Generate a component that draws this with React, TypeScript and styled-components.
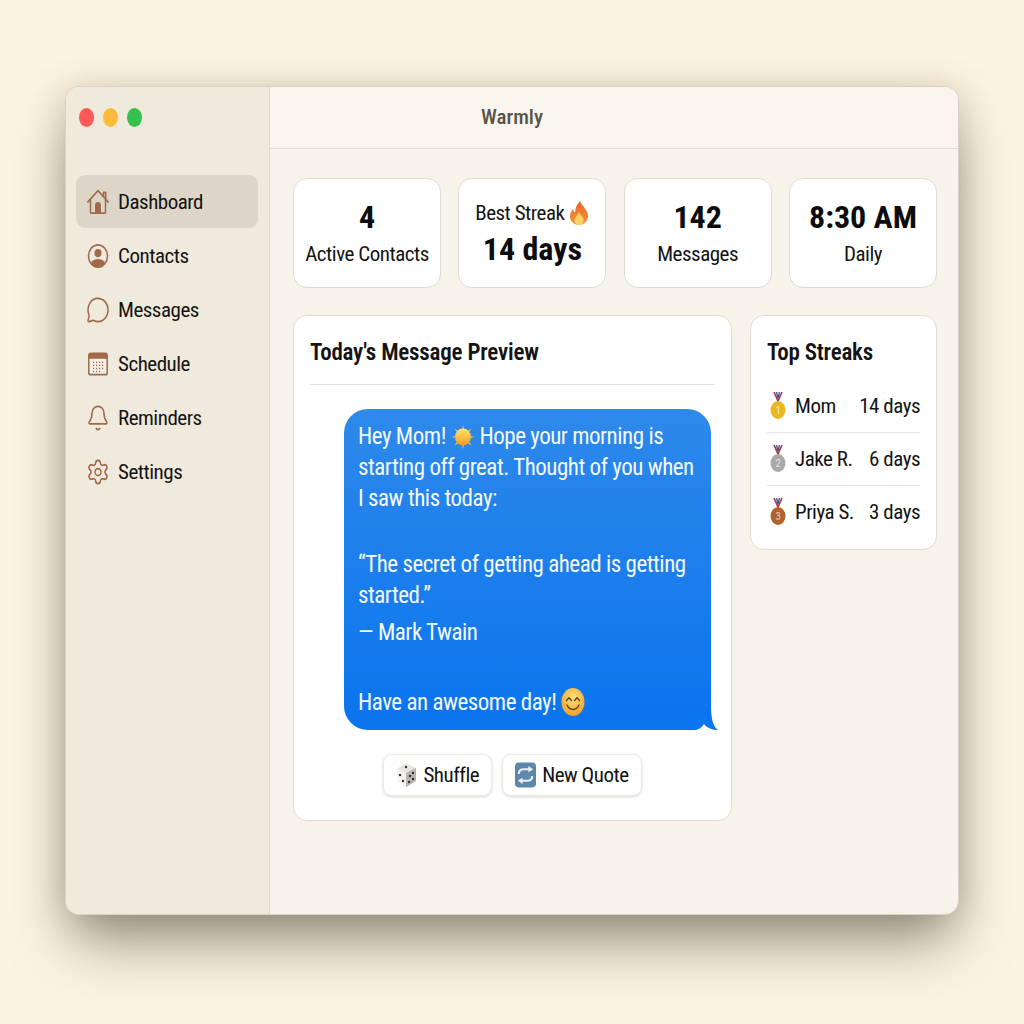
import { ReactNode } from "react";
import styled, { createGlobalStyle } from "styled-components";
import { Bell, MessageCircle, Settings } from "lucide-react";

const GlobalStyle = createGlobalStyle`
  html, body { margin: 0; padding: 0; background: #fcf3e1; }
  body {
    font-family: Roboto, "Liberation Sans", sans-serif;
    font-stretch: 85%;
    letter-spacing: -0.48px;
    color: #141414;
  }
  * { box-sizing: border-box; }
`;

const Page = styled.div`
  width: 1024px;
  height: 1024px;
  padding: 86px 65px 0;
  overflow: hidden;
  background: #fcf3e1;
`;

const Window = styled.div`
  width: 894px;
  height: 829px;
  display: flex;
  border-radius: 14px;
  overflow: hidden;
  border: 1px solid #d8d2c5;
  background: #f6f3ea;
  box-shadow: 0 34px 58px -8px rgba(62, 56, 44, 0.5), 0 4px 36px rgba(90, 78, 55, 0.24);
`;

const Sidebar = styled.aside`
  width: 204px;
  flex: none;
  padding: 0 11px 0 10px;
  background: #f0eadd;
  border-right: 1px solid #e3dccd;
`;

const TrafficLights = styled.div`
  height: 88px;
  display: flex;
  align-items: center;
  gap: 9px;
  padding: 0 0 28px 3px;
`;

const Light = styled.span<{ $color: string }>`
  width: 15px;
  height: 19px;
  border-radius: 50%;
  background: ${(p) => p.$color};
`;

const NavList = styled.nav`
  display: flex;
  flex-direction: column;
  gap: 1px;
`;

const NavItem = styled.div<{ $active?: boolean }>`
  height: 53px;
  display: flex;
  align-items: center;
  gap: 8px;
  padding: 1px 0 0 10px;
  border-radius: 9px;
  font-size: 21px;
  background: ${(p) => (p.$active ? "#ddd5c8" : "transparent")};
  svg {
    flex: none;
    width: 24px;
    height: 28px;
    color: #a0694a;
  }
`;

const Content = styled.main`
  flex: 1;
  min-width: 0;
  display: flex;
  flex-direction: column;
`;

const TitleBar = styled.header`
  height: 62px;
  flex: none;
  display: flex;
  align-items: center;
  justify-content: center;
  padding: 0 204px 1px 0;
  font-size: 21px;
  font-weight: 500;
  letter-spacing: 0;
  color: #57534a;
  background: #f9f5ec;
  border-bottom: 1px solid #e2ddd1;
`;

const Body = styled.div`
  padding: 29px 21px 0 23px;
  display: flex;
  flex-direction: column;
  gap: 27px;
`;

const StatsRow = styled.section`
  display: grid;
  grid-template-columns: repeat(4, 148px);
  justify-content: space-between;
`;

const Card = styled.div`
  background: #fff;
  border: 1px solid #e3dccd;
  border-radius: 14px;
`;

const StatCard = styled(Card)<{ $labelFirst?: boolean }>`
  height: 110px;
  display: flex;
  flex-direction: column;
  align-items: center;
  justify-content: center;
  gap: ${(p) => (p.$labelFirst ? 4 : 5)}px;
  padding: ${(p) => (p.$labelFirst ? "2px 0 0" : "0 0 2px")};
`;

const StatValue = styled.div`
  font-size: 32px;
  line-height: 38px;
  font-weight: 680;
  letter-spacing: 0;
  color: #0c0c0c;
`;

const StatLabel = styled.div`
  display: flex;
  align-items: center;
  gap: 5px;
  height: 26px;
  font-size: 21px;
  line-height: 26px;
`;

const Columns = styled.section`
  display: flex;
  align-items: flex-start;
  justify-content: space-between;
`;

const PreviewCard = styled(Card)`
  width: 439px;
  height: 506px;
  padding: 0 16px;
`;

const PreviewTitle = styled.h2`
  margin: 0;
  height: 69px;
  display: flex;
  align-items: center;
  padding-top: 4px;
  font-size: 23px;
  font-weight: 640;
  letter-spacing: -0.2px;
  border-bottom: 1px solid #e4e2dc;
`;

const Bubble = styled.div`
  position: relative;
  width: 367px;
  height: 321px;
  margin: 24px 4px 0 auto;
  padding: 12px 14px;
  border-radius: 24px;
  color: #f4f9ff;
  background: linear-gradient(180deg, #2e89ea 0%, #0a74ee 100%);
  font-size: 23px;
  line-height: 31px;
`;

const BubbleTail = styled.svg`
  position: absolute;
  right: -8px;
  bottom: 0;
`;

const Para = styled.p<{ $top?: number }>`
  margin: ${(p) => p.$top ?? 0}px 0 0;
  white-space: nowrap;
  svg { vertical-align: -6px; }
`;

const Actions = styled.div`
  margin-top: 24px;
  display: flex;
  justify-content: center;
  gap: 10px;
`;

const ActionButton = styled.button`
  height: 42px;
  display: flex;
  align-items: center;
  gap: 6px;
  padding: 0 12px;
  font: inherit;
  font-stretch: 85%;
  font-size: 21px;
  letter-spacing: -0.48px;
  color: #141414;
  background: #fff;
  border: 1px solid #eeebe5;
  border-radius: 9px;
  box-shadow: 0 1px 3px rgba(60, 50, 30, 0.2);
`;

const StreaksCard = styled(Card)`
  width: 187px;
  height: 235px;
  padding: 0 16px;
`;

const StreaksTitle = styled.h3`
  margin: 0;
  height: 64px;
  padding-top: 8px;
  display: flex;
  align-items: center;
  font-size: 23px;
  font-weight: 640;
  letter-spacing: -0.2px;
`;

const StreakRow = styled.div`
  height: 53px;
  display: flex;
  align-items: center;
  font-size: 21px;
  border-bottom: 1px solid #e6e5e2;
  &:last-child { border-bottom: none; height: 52px; }
  svg { flex: none; margin: 0 9px 2px 3px; }
  span:last-child { margin-left: auto; }
`;

const CalendarIcon = () => (
  <svg viewBox="0 0 24 24" preserveAspectRatio="none" fill="none">
    <rect x="2.800" y="2.800" width="18.400" height="18.400" rx="2" fill="#f6efe6" stroke="#a0694a" strokeWidth="1.500" />
    <path d="M2.800 7.500V4.800a2 2 0 0 1 2-2h14.400a2 2 0 0 1 2 2v2.700z" fill="#a0694a" />
    {[10, 12.600, 15.200, 17.800].map((y, r) =>
      [7, 10, 13, 16].map((x) =>
        r === 3 && x === 16 ? null : <rect key={`${x}-${y}`} x={x} y={y} width="1.200" height="1.200" fill="#a0694a" />
      )
    )}
  </svg>
);

const HouseIcon = () => (
  <svg viewBox="0 0 24 24" preserveAspectRatio="none" fill="none" stroke="#a0694a" strokeWidth="1.500" strokeLinejoin="round" strokeLinecap="round">
    <path d="M1.800 12 12 2.200 22.200 12" />
    <path d="M17.500 7V3.800h2.200v5.400" />
    <path d="M4.500 10.200v10.600a.8.8 0 0 0 .8.8h13.400a.8.8 0 0 0 .8-.8V10.200" />
    <path d="M9.800 21.500v-6.500a2.200 2.200 0 0 1 4.400 0v6.500z" fill="#a0694a" />
  </svg>
);

const ContactIcon = () => (
  <svg viewBox="0 0 24 24" preserveAspectRatio="none" fill="none">
    <circle cx="12" cy="12" r="9.500" stroke="#a0694a" strokeWidth="1.500" />
    <circle cx="12" cy="9.500" r="3.500" fill="#a0694a" />
    <path d="M5 18.300C6.200 15.500 8.900 14.600 12 14.600s5.800.9 7 3.700A9.500 9.500 0 0 1 12 21.500a9.500 9.500 0 0 1-7-3.200z" fill="#a0694a" />
  </svg>
);

const FlameIcon = () => (
  <svg width="20" height="26" viewBox="0 0 20 26">
    <defs>
      <linearGradient id="flame" x1="0" y1="0" x2="0" y2="1">
        <stop offset="0" stopColor="#f0622a" />
        <stop offset="1" stopColor="#f2993a" />
      </linearGradient>
    </defs>
    <path d="M11 1c1 4 7 8 8 14 .6 5.500-4 10-9 10S.5 21 1 15.500c.3-3 2-5 3-6.500.4 1.800 1 3 2.200 3.500C6 8 8 4 11 1z" fill="url(#flame)" />
    <path d="M10 12c.6 3 5 5 4.600 8.500C14.300 23.500 12.300 25 10 25s-4.500-1.600-4.600-4.500C5.300 17.500 8.500 15.500 10 12z" fill="#fbd267" />
  </svg>
);

const SunIcon = () => (
  <svg width="24" height="26" viewBox="0 0 24 26">
    <defs>
      <linearGradient id="sun" x1="0" y1="0" x2="0" y2="1">
        <stop offset="0" stopColor="#fde36f" />
        <stop offset="1" stopColor="#f79a1e" />
      </linearGradient>
    </defs>
    {[0, 45, 90, 135, 180, 225, 270, 315].map((a) => (
      <path key={a} d="M12 0.500 12.800 5h-1.600z" fill="#f0c23c" transform={`rotate(${a} 12 13)`} />
    ))}
    <ellipse cx="12" cy="13" rx="8" ry="8.500" fill="url(#sun)" />
  </svg>
);

const SmileIcon = () => (
  <svg width="24" height="28" viewBox="0 0 24 28" fill="none">
    <defs>
      <radialGradient id="smile" cx="0.5" cy="0.35" r="0.7">
        <stop offset="0" stopColor="#fde27a" />
        <stop offset="1" stopColor="#ee9a26" />
      </radialGradient>
    </defs>
    <ellipse cx="12" cy="14" rx="11.500" ry="14" fill="url(#smile)" />
    <path d="M5.500 12.500 8 9.800l2.500 2.700M13.500 12.500 16 9.800l2.500 2.700" stroke="#5f3a14" strokeWidth="1.300" strokeLinecap="round" strokeLinejoin="round" />
    <path d="M6 17c1.500 3.500 4 4.500 6 4.500s4.500-1 6-4.500" stroke="#5f3a14" strokeWidth="1.300" strokeLinecap="round" />
  </svg>
);

const DiceIcon = () => (
  <svg width="21" height="26" viewBox="0 0 21 26">
    <path d="M10 1 20 6v13L10 25 1 19V7z" fill="#e8e6e1" />
    <path d="M10 11 20 6v13L10 25z" fill="#b9b6b0" />
    <path d="M1 7 10 11v14L1 19z" fill="#f4f3ef" />
    {[[4, 13], [7, 19], [10, 5], [14, 14], [17, 11], [17, 17], [13, 20]].map(([cx, cy]) => (
      <circle key={`${cx}-${cy}`} cx={cx} cy={cy} r="1.200" fill="#33312e" />
    ))}
  </svg>
);

const RepeatIcon = () => (
  <svg width="21" height="26" viewBox="0 0 22 26" fill="none">
    <rect width="22" height="26" rx="4" fill="#5d87ab" />
    <path d="M4 12c0-3 2-5 5-5h6" stroke="#e8f0f6" strokeWidth="2.200" />
    <path d="M14 3.500 19 7l-5 3.500z" fill="#e8f0f6" />
    <path d="M18 14c0 3-2 5-5 5H7" stroke="#e8f0f6" strokeWidth="2.200" />
    <path d="M8 15.500 3 19l5 3.500z" fill="#e8f0f6" />
  </svg>
);

const Medal = ({ color, mark }: { color: string; mark: string }) => (
  <svg width="16" height="27" viewBox="0 0 16 27">
    <path d="M4 0 8 9 12 0" fill="none" stroke="#a33a46" strokeWidth="1.600" />
    <path d="M6.500 0 8 6 9.500 0" fill="none" stroke="#3d4f96" strokeWidth="1.300" />
    <ellipse cx="8" cy="18" rx="7.500" ry="9" fill={color} />
    <text x="8" y="22" textAnchor="middle" fontSize="11" fill="#ffffffb0" fontFamily="Roboto, sans-serif">{mark}</text>
  </svg>
);

const navItems: { label: string; icon: ReactNode }[] = [
  { label: "Dashboard", icon: <HouseIcon /> },
  { label: "Contacts", icon: <ContactIcon /> },
  { label: "Messages", icon: <MessageCircle strokeWidth={1.500} preserveAspectRatio="none" /> },
  { label: "Schedule", icon: <CalendarIcon /> },
  { label: "Reminders", icon: <Bell strokeWidth={1.500} preserveAspectRatio="none" /> },
  { label: "Settings", icon: <Settings strokeWidth={1.500} preserveAspectRatio="none" /> },
];

const streaks = [
  { name: "Mom", days: "14 days", color: "#e8b820", mark: "1" },
  { name: "Jake R.", days: "6 days", color: "#a9a9ac", mark: "2" },
  { name: "Priya S.", days: "3 days", color: "#b0632e", mark: "3" },
];

export default function App() {
  return (
    <Page>
      <GlobalStyle />
      <Window>
        <Sidebar>
          <TrafficLights>
            <Light $color="#fb5a57" />
            <Light $color="#fdbb3c" />
            <Light $color="#34c14d" />
          </TrafficLights>
          <NavList>
            {navItems.map((item, i) => (
              <NavItem key={item.label} $active={i === 0}>
                {item.icon}
                {item.label}
              </NavItem>
            ))}
          </NavList>
        </Sidebar>
        <Content>
          <TitleBar>Warmly</TitleBar>
          <Body>
            <StatsRow>
              <StatCard>
                <StatValue>4</StatValue>
                <StatLabel>Active Contacts</StatLabel>
              </StatCard>
              <StatCard $labelFirst>
                <StatLabel>
                  Best Streak <FlameIcon />
                </StatLabel>
                <StatValue>14 days</StatValue>
              </StatCard>
              <StatCard>
                <StatValue>142</StatValue>
                <StatLabel>Messages</StatLabel>
              </StatCard>
              <StatCard>
                <StatValue>8:30 AM</StatValue>
                <StatLabel>Daily</StatLabel>
              </StatCard>
            </StatsRow>
            <Columns>
              <PreviewCard>
                <PreviewTitle>Today's Message Preview</PreviewTitle>
                <Bubble>
                  <Para>
                    Hey Mom! <SunIcon /> Hope your morning is
                    <br />
                    starting off great. Thought of you when
                    <br />I saw this today:
                  </Para>
                  <Para $top={35}>
                    “The secret of getting ahead is getting
                    <br />
                    started.”
                  </Para>
                  <Para $top={6}>— Mark Twain</Para>
                  <Para $top={39}>
                    Have an awesome day! <SmileIcon />
                  </Para>
                  <BubbleTail width="40" height="30" viewBox="0 0 40 30">
                    <path d="M8 6H32C32 15 33 26 39 30 34 30 28 28 25 24 23 27 21 29 17 30H8z" fill="#0b74ee" />
                  </BubbleTail>
                </Bubble>
                <Actions>
                  <ActionButton>
                    <DiceIcon /> Shuffle
                  </ActionButton>
                  <ActionButton>
                    <RepeatIcon /> New Quote
                  </ActionButton>
                </Actions>
              </PreviewCard>
              <StreaksCard>
                <StreaksTitle>Top Streaks</StreaksTitle>
                {streaks.map((s) => (
                  <StreakRow key={s.name}>
                    <Medal color={s.color} mark={s.mark} />
                    <span>{s.name}</span>
                    <span>{s.days}</span>
                  </StreakRow>
                ))}
              </StreaksCard>
            </Columns>
          </Body>
        </Content>
      </Window>
    </Page>
  );
}
